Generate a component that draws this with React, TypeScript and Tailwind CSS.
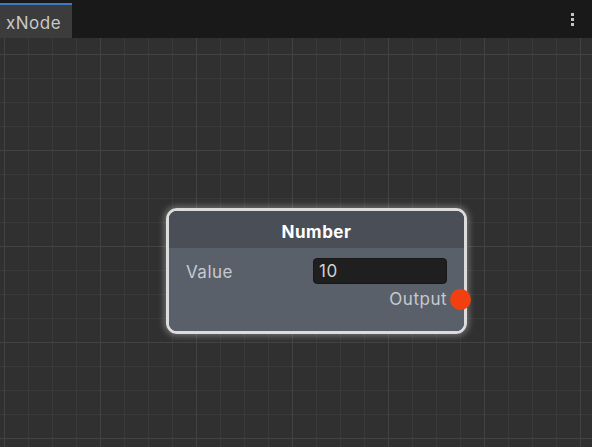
export default function App() {
  return (
    <div className="w-[592px] h-[447px] flex flex-col bg-[#191919] overflow-hidden font-['Inter','Noto_Sans',sans-serif]">
      {/* tab strip */}
      <div className="h-[38px] shrink-0 flex items-end justify-between bg-[#191919]">
        <div className="h-[35px] w-[72px] bg-[#3c3c3c] border-t-2 border-[#3d7ac4] flex items-center pl-[6px] pt-[3px]">
          <span className="text-[17px] tracking-[0.5px] text-[#c9c9c9] leading-none">xNode</span>
        </div>
        <div className="h-[38px] flex flex-col items-center justify-center gap-[2px] pr-[18px]">
          <span className="w-[3px] h-[3px] bg-[#c4c4c4]" />
          <span className="w-[3px] h-[3px] bg-[#c4c4c4]" />
          <span className="w-[3px] h-[3px] bg-[#c4c4c4]" />
        </div>
      </div>

      {/* graph canvas */}
      <div className="relative flex-1 bg-[#303030] bg-[linear-gradient(to_right,#434343_1px,transparent_1px),linear-gradient(to_bottom,#434343_1px,transparent_1px),linear-gradient(to_right,#393939_1px,transparent_1px),linear-gradient(to_bottom,#393939_1px,transparent_1px)] [background-size:96px_96px,96px_96px,24px_24px,24px_24px] [background-position:4px_16px,4px_16px,4px_16px,4px_16px]">
        <div className="absolute left-[166px] top-[170px] w-[301px] h-[126px] rounded-[11px] border-[3px] border-[#dcdcdc] shadow-[0_0_6px_2px_rgba(255,255,255,0.3)]">
          <div className="h-full flex flex-col rounded-[8px] overflow-hidden">
            <div className="h-[37px] shrink-0 bg-[#4a4f57] flex items-center justify-center pt-[7px]">
              <span className="text-[17px] tracking-[0.5px] font-bold text-white">Number</span>
            </div>
            <div className="flex-1 bg-[#5a6069] flex flex-col pt-[10px] pl-[17px] pr-[17px]">
              <div className="flex items-center justify-between h-[26px]">
                <span className="text-[17px] tracking-[0.5px] text-[#c5cad0] mt-[3px]">Value</span>
                <div className="w-[134px] h-[26px] rounded-[4px] bg-[#1f1f1f] border border-[#171717] flex items-center pl-[5px] pt-[2px]">
                  <span className="text-[17px] tracking-[0.5px] text-[#d2d2d2]">10</span>
                </div>
              </div>
              <div className="flex justify-end mt-[2px] h-[26px] items-center">
                <span className="text-[17px] tracking-[0.5px] text-[#c5cad0] mt-[2px]">Output</span>
              </div>
            </div>
          </div>
          <div className="absolute left-[281px] top-[78px] w-[21px] h-[21px] rounded-full bg-[#f23f10]" />
        </div>
      </div>
    </div>
  );
}
